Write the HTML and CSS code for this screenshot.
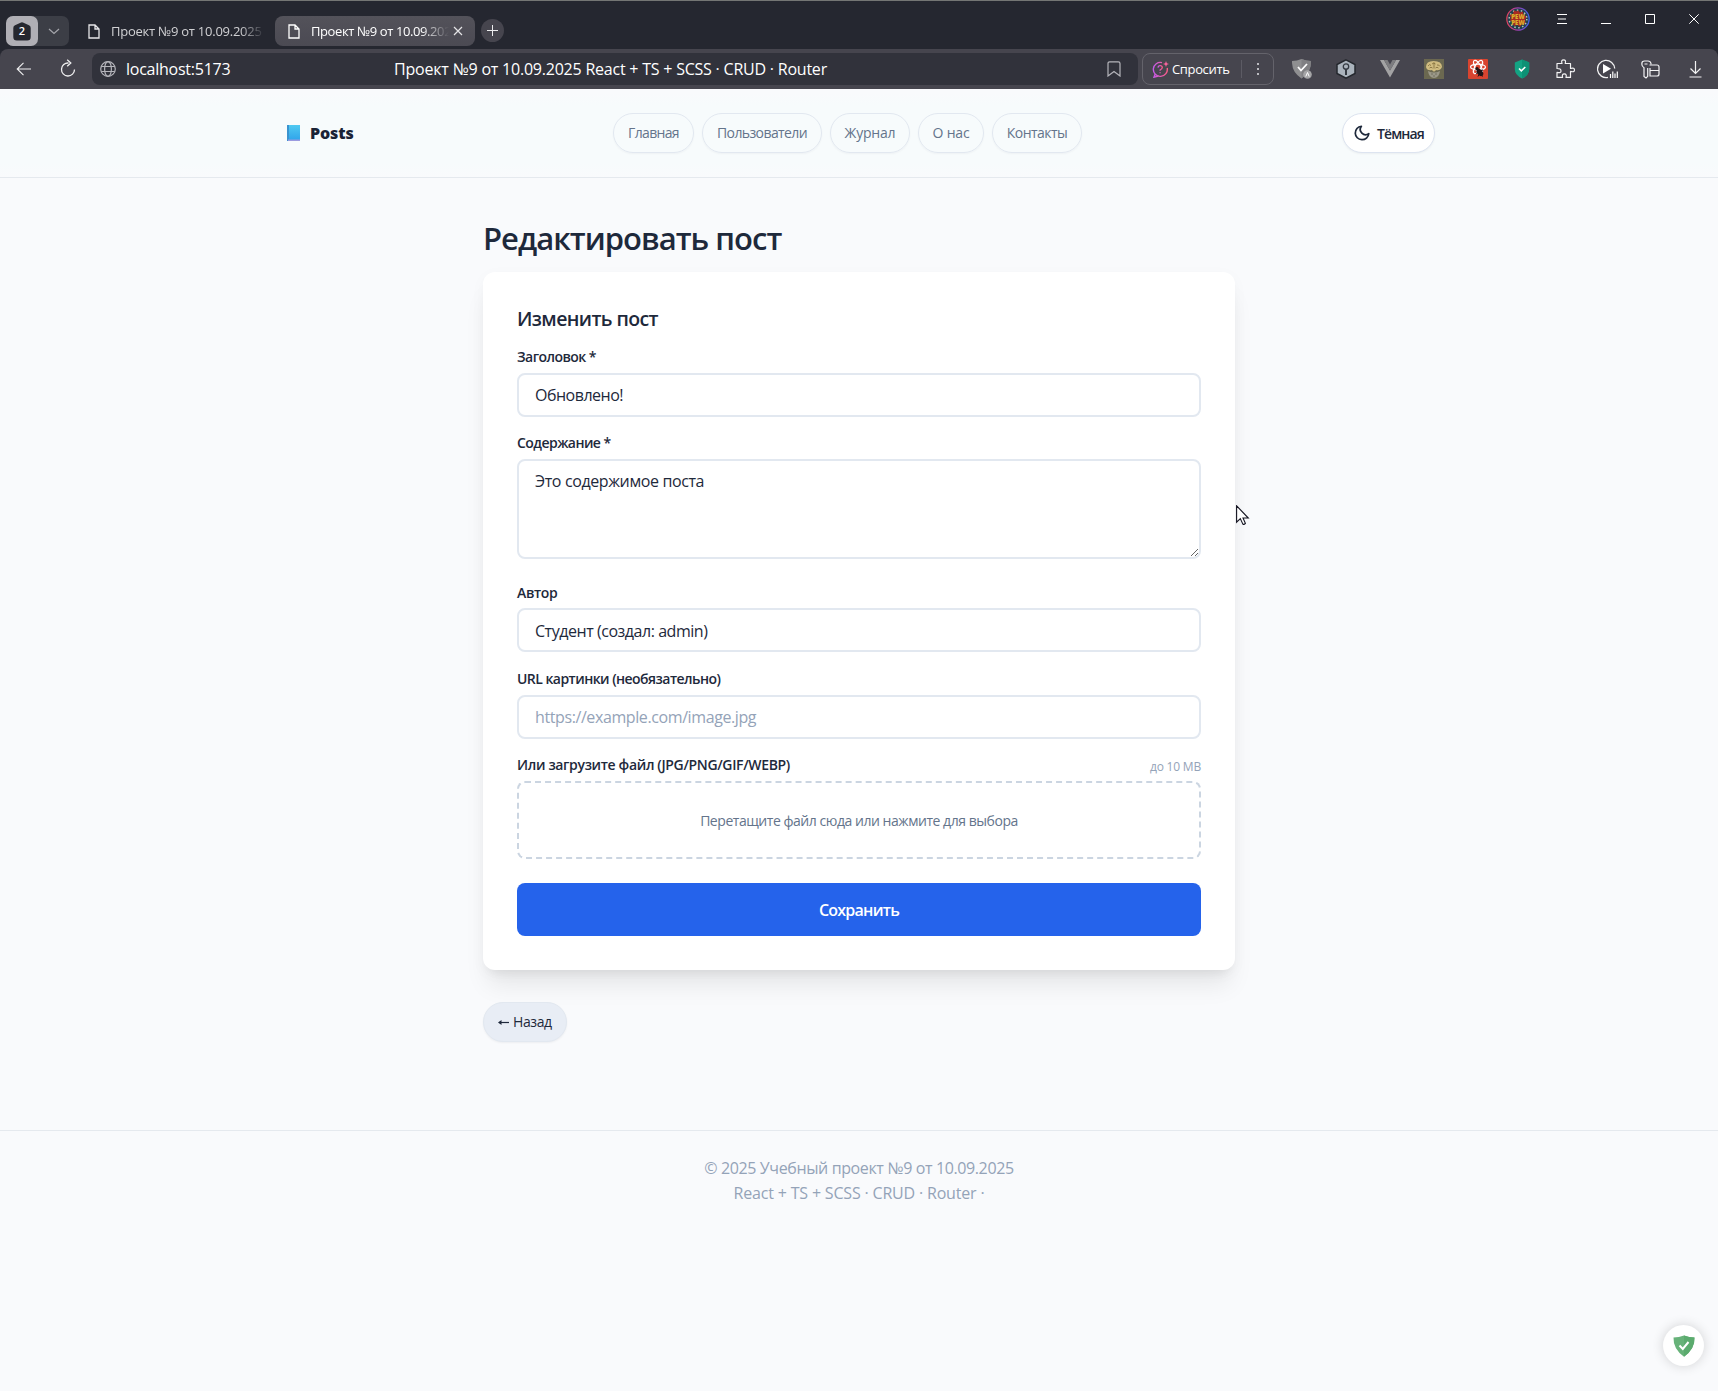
FILE: index.html
```html
<!DOCTYPE html>
<html lang="ru">
<head>
<meta charset="utf-8">
<title>Проект №9 от 10.09.2025</title>
<link rel="stylesheet" href="styles.css">
</head>
<body>
<div class="browser">
  <div class="tabbar">
    <div class="tab-group">
      <div class="tab-count"><svg width="18" height="19" viewBox="0 0 18 19"><path d="M7.5.8Q9-.2 10.500.8L16 3.200Q17.700 4 17.700 6V15q0 3.500-3.500 3.500H3.800Q.3 18.500.3 15V6Q.3 4 2 3.200Z" fill="#25272f"/></svg><span>2</span></div>
      <svg class="chev" width="12" height="7" viewBox="0 0 12 7"><path d="M1 1l5 4.500L11 1" fill="none" stroke="#a5a6ac" stroke-width="1.200"/></svg>
    </div>
    <div class="tab">
      <svg width="12" height="15" viewBox="0 0 12 15"><path d="M1 1h6l4 4v9H1zM7 1v4h4" fill="none" stroke="#e6e6e8" stroke-width="1.300"/></svg>
      <span class="tab-title">Проект №9 от 10.09.2025</span>
    </div>
    <div class="tab tab-active">
      <svg width="12" height="15" viewBox="0 0 12 15"><path d="M1 1h6l4 4v9H1zM7 1v4h4" fill="none" stroke="#fff" stroke-width="1.300"/></svg>
      <span class="tab-title">Проект №9 от 10.09.2025</span>
      <svg width="10" height="10" viewBox="0 0 10 10"><path d="M1 1l8 8M9 1L1 9" stroke="#e4e4e6" stroke-width="1.200"/></svg>
    </div>
    <div class="new-tab"><svg width="11" height="11" viewBox="0 0 11 11"><path d="M5.500 0v11M0 5.500h11" stroke="#ececee"/></svg></div>
    <div class="window-buttons">
      <div class="cell"><svg width="24" height="24" viewBox="0 0 24 24">
        <defs><linearGradient id="ring"><stop offset="0" stop-color="#e0405a"/><stop offset=".5" stop-color="#9b3fae"/><stop offset="1" stop-color="#3d62e8"/></linearGradient></defs>
        <circle cx="12" cy="12" r="11.200" fill="#20404e" stroke="url(#ring)" stroke-width="1.200"/>
        <circle cx="12" cy="12" r="8.800" fill="none" stroke="#b9c4bd" stroke-width="1.500" stroke-dasharray="1.500 2.500"/>
        <path d="M12 3l2 2.500 3-1 .5 3.500 3 2-1.500 3 .5 3-3.500 1-2 3-2.500-2-3.500 1-1-3.500-3-2 1-3-1.500-2.500 3.500-1 1-3.500 3 1z" fill="#a92a22"/>
        <text x="12" y="11.500" text-anchor="middle" class="pew">PEW</text><text x="12" y="18" text-anchor="middle" class="pew">PEW</text></svg></div>
      <div class="cell"><svg width="10" height="10" viewBox="0 0 10 10"><path d="M0 .5h10M1 5h8M0 9.500h10" stroke="#fff"/></svg></div>
      <div class="cell"><svg width="10" height="10" viewBox="0 0 10 10"><path d="M0 9.500h10" stroke="#fff"/></svg></div>
      <div class="cell"><svg width="10" height="10" viewBox="0 0 10 10"><path d="M.5.5h9v9h-9z" fill="none" stroke="#fff"/></svg></div>
      <div class="cell"><svg width="10" height="10" viewBox="0 0 10 10"><path d="M.3.3l9.400 9.400M9.700.3L.3 9.700" stroke="#fff"/></svg></div>
    </div>
  </div>
  <div class="toolbar">
    <svg class="back" width="15" height="14" viewBox="0 0 15 14"><path d="M7.500.8L1.200 7l6.300 6.200M1.200 7H15" fill="none" stroke="#f0f0f1" stroke-width="1.100"/></svg>
    <svg class="reload" width="16" height="18" viewBox="0 0 16 18"><path d="M8.500 4A6.500 6.500 0 1 0 14.500 10.500M7.200.8L10.800 4 7.200 7.200" fill="none" stroke="#f0f0f1" stroke-width="1.300"/></svg>
    <div class="address">
      <svg width="16" height="16" viewBox="0 0 16 16" fill="none" stroke="#b4b4ba" stroke-width="1.200"><circle cx="8" cy="8" r="7.300"/><ellipse cx="8" cy="8" rx="3.400" ry="7.300"/><path d="M1.300 5.500h13.400M1.300 10.500h13.400"/></svg>
      <span class="host">localhost:5173</span>
      <span class="page-title">Проект №9 от 10.09.2025 React + TS + SCSS · CRUD · Router</span>
      <svg class="bookmark" width="14" height="16" viewBox="0 0 14 16"><path d="M1 15V2.500Q1 .8 2.700.8h8.600Q13 .8 13 2.500V15L7 10.500z" fill="none" stroke="#b4b4ba" stroke-width="1.200"/></svg>
    </div>
    <div class="ask">
      <svg width="17" height="17" viewBox="0 0 17 17"><defs><linearGradient id="askg"><stop offset="0" stop-color="#c45be8"/><stop offset="1" stop-color="#ff5c88"/></linearGradient></defs><path d="M10 1.600A7 7 0 1 0 15.200 7M3.300 12.500L2 16.200l5.200-1.300" fill="none" stroke="url(#askg)" stroke-width="1.400"/><path d="M6 6.600q.2-2 2.200-2t2.100 1.900q0 1.200-2.200 2.500v.8M8.100 11.300v1" fill="none" stroke="url(#askg)" stroke-width="1.300"/><path d="M14 0l.8 2.200L17 3l-2.200.8L14 6l-.8-2.200L11 3l2.200-.8z" fill="#ff66a0"/></svg>
      <span class="ask-text">Спросить</span>
      <span class="ask-sep"></span>
      <svg width="2" height="12" viewBox="0 0 2 12" fill="#bbbbc0"><path d="M0 0h2v2H0zM0 5h2v2H0zM0 10h2v2H0z"/></svg>
    </div>
    <div class="extensions">
      <div class="cell"><svg width="20" height="20" viewBox="0 0 20 20"><path d="M0 2Q5 2 9.500 0 14 2 19 2 19.500 13 9.500 19.500-.5 13 0 2z" fill="#8f8f91"/><path d="M9.500 0Q14 2 19 2 19.500 13 9.500 19.500z" fill="#808083"/><path d="M6 8l3 3.500 6-6.500" fill="none" stroke="#fff" stroke-width="1.800"/><circle cx="15.500" cy="15.500" r="4.300" fill="#a5a5a7"/><path d="M13.800 17.500l1.700-4 1.700 4" fill="none" stroke="#fff"/></svg></div>
      <div class="cell"><svg width="20" height="20" viewBox="0 0 20 20"><path d="M10 .8L19 5.500v9L10 19.200 1 14.500v-9z" fill="#aab3bc" stroke="#25282e" stroke-width="1.500"/><circle cx="10" cy="7.500" r="2.700" fill="none" stroke="#343a42" stroke-width="1.300"/><path d="M10 10v6" stroke="#343a42" stroke-width="2"/></svg></div>
      <div class="cell"><svg width="20" height="18" viewBox="0 0 20 18"><path d="M0 0h4l6 10.500L16 0h4L10 17.500z" fill="#a3a3a4"/><path d="M4 0h3.500L10 4.500 12.500 0H16l-6 10.500z" fill="#7d7d80"/></svg></div>
      <div class="cell"><svg width="20" height="20" viewBox="0 0 20 20"><path d="M0 0h20v20H0z" fill="#6b6850"/><path d="M2 8Q2 2 9.500 2 18 2 18 8q-2 4-6 3-2 3-4 0-5 1-6-3z" fill="#d0bc80"/><path d="M4 7q1.500-2.500 3-.5M8 5q2-2 3.500 0M13 6q2-.5 3 1.500M5.500 9q1.500-1.500 3 0M11.500 9q1.500-1.500 3 0M10 3.500v6" fill="none" stroke="#7d6a38" stroke-width=".8"/><path d="M4 12q6 3 12 0-1 7-6 7-5 0-6-7z" fill="#9b9888"/><path d="M7 15h2M11 15h2M9 17h2" stroke="#6a6758" stroke-width=".8"/></svg></div>
      <div class="cell"><svg width="20" height="20" viewBox="0 0 20 20"><rect width="20" height="20" rx="1" fill="#d9442f"/><g fill="none" stroke="#fff" stroke-width="1.200"><ellipse cx="10" cy="8" rx="7.500" ry="2.900"/><ellipse cx="10" cy="8" rx="7.500" ry="2.900" transform="rotate(60 10 8)"/><ellipse cx="10" cy="8" rx="7.500" ry="2.900" transform="rotate(120 10 8)"/></g><ellipse cx="12" cy="13.500" rx="2.600" ry="4" transform="rotate(-40 12 13.500)" fill="#211518"/><circle cx="9" cy="9.800" r="1.800" fill="#211518"/><path d="M8 14.500l7-3.500M10 17.500l4-7M14.500 17.500l-3-6" stroke="#211518"/></svg></div>
      <div class="cell"><svg width="16" height="20" viewBox="0 0 16 20"><path d="M8 .5l7.200 3V10q0 6-7.200 9.500Q.8 16 .8 10V3.500z" fill="#13a383"/><path d="M8 .5l7.200 3V10q0 6-7.200 9.500z" fill="#0d9175"/><path d="M5 9.500l2.300 2.300L11.300 8" fill="none" stroke="#fff" stroke-width="1.600"/></svg></div>
      <div class="cell"><svg width="20" height="20" viewBox="0 0 20 20"><path d="M1 4.500h5q-1.200-3.700 1.600-3.700T9.200 4.500h5.300v5q4-1.300 4 1.400t-4 1.500v6H10q1-3.500-1.700-3.500t-1.700 3.500H1v-5q4 1 4-1.500T1 9.500z" fill="none" stroke="#f2f2f3" stroke-width="1.200" stroke-linejoin="round"/></svg></div>
      <div class="cell play"><svg width="21" height="20" viewBox="0 0 21 20"><path d="M11 18.400A8.600 8.600 0 1 1 17.700 9.500" fill="none" stroke="#f2f2f3" stroke-width="1.300"/><path d="M6 5l8 4.800L6 14.500z" fill="#fff"/><path d="M13.500 15v4M15.800 12.500V19M18 14.500V19M20.300 12.500V19" stroke="#fff" stroke-width="1.200"/></svg></div>
      <div class="cell keys"><svg width="19" height="19" viewBox="0 0 19 19" fill="none" stroke="#f2f2f3" stroke-width="1.200"><path d="M10 4.500V3.500Q9.500 1 7 1H3.500Q.8 1 .8 4q0 2.500 2.200 3.800V16.500L5 18l1.700-1.700V8"/><path d="M8.500 5H16q2 0 2 2v7q0 2-2 2H9V8M9 10.500h9M3.500 4h3"/></svg></div>
      <div class="cell dl"><svg width="13" height="17" viewBox="0 0 13 17"><path d="M6.500 0v12M1.500 7.500l5 5 5-5M.5 16h12" fill="none" stroke="#f2f2f3" stroke-width="1.200"/></svg></div>
    </div>
  </div>
</div>

<header class="header">
  <div class="header-inner">
    <a class="brand"><svg width="13" height="16" viewBox="0 0 13 16"><defs><linearGradient id="book" x2="0" y2="1"><stop offset="0" stop-color="#50c9f1"/><stop offset="1" stop-color="#2ea2ea"/></linearGradient></defs><path d="M0 0h13v16H0z" fill="url(#book)"/><path d="M0 0h2v16H0z" fill="#3a93cf"/><path d="M1 14.500h12V16H1z" fill="#9b9be0"/></svg><span>Posts</span></a>
    <nav class="nav">
      <a class="pill n1">Главная</a><a class="pill n2">Пользователи</a><a class="pill n3">Журнал</a><a class="pill n4">О нас</a><a class="pill n5">Контакты</a>
    </nav>
    <button class="theme"><svg width="18" height="18" viewBox="0 0 24 24"><path d="M21 12.800A9 9 0 1 1 11.200 3a7 7 0 0 0 9.800 9.800z" fill="none" stroke="#1e293b" stroke-width="2.300" stroke-linejoin="round"/></svg><span>Тёмная</span></button>
  </div>
</header>

<main class="main">
  <h1>Редактировать пост</h1>
  <form class="card">
    <h2>Изменить пост</h2>
    <div class="field"><label class="label">Заголовок *</label><input class="input i1" value="Обновлено!"></div>
    <div class="field field-area"><label class="label">Содержание *</label><textarea class="input area">Это содержимое поста</textarea></div>
    <div class="field"><label class="label l3">Автор</label><input class="input i3" value="Студент (создал: admin)"></div>
    <div class="field"><label class="label l4">URL картинки (необязательно)</label><input class="input i4" placeholder="https://example.com/image.jpg"></div>
    <div class="field field-file">
      <div class="file-head"><label class="label l5">Или загрузите файл (JPG/PNG/GIF/WEBP)</label><span class="hint">до 10 MB</span></div>
      <div class="drop">Перетащите файл сюда или нажмите для выбора</div>
    </div>
    <button class="save" type="button">Сохранить</button>
  </form>
  <a class="back-link"><svg width="11" height="7" viewBox="0 0 11 7"><path d="M1 3.500h10" stroke="#1e293b" stroke-width="1.200"/><path d="M0 3.500L3.500 1v5z" fill="#1e293b"/></svg>Назад</a>
</main>

<footer class="footer">
  <div class="f1">© 2025 Учебный проект №9 от 10.09.2025</div>
  <div class="f2">React + TS + SCSS · CRUD · Router ·</div>
</footer>

<div class="guard"><svg width="22" height="22" viewBox="0 0 22 22"><path d="M.5 2.500Q6 2.500 11 .5q5 2 10.500 2Q22 14 11 21.700 0 14 .5 2.500z" fill="#67b279"/><path d="M11 .5q5 2 10.500 2Q22 14 11 21.700z" fill="#5bab6e"/><path d="M6.500 10.500l3.300 3.500 5.700-7" fill="none" stroke="#fff" stroke-width="2"/></svg></div>
<svg class="cursor" width="14" height="21" viewBox="0 0 14 21"><path d="M.6.8v16.400l3.700-3.600 2.600 5.600q1.300.6 2.500-.8L7 13h5.300z" fill="#fff" stroke="#12121f" stroke-width="1.100"/></svg>
</body>
</html>
```
FILE: styles.css
```css
* { box-sizing: border-box; }
body {
  margin: 0;
  position: relative;
  height: 1391px;
  overflow: hidden;
  background: #f9fafc;
  color: #1e293b;
  font: 16px/1.6 "Open Sans", "Noto Sans", sans-serif;
}
svg { display: block; flex: none; }
span, a { white-space: nowrap; }
input, textarea, button { font-family: inherit; color: inherit; margin: 0; }

/* Browser window */
.browser { height: 89px; background: #252730; border-top: 1px solid #747674; color: #fff; }
.tabbar { display: flex; height: 48px; padding: 15px 2px 0 6px; }
.tab-group { display: flex; width: 63px; height: 30px; border-radius: 7px; background: #3c3e46; align-items: center; }
.tab-count { display: grid; place-items: center; width: 32px; height: 30px; border-radius: 7px; background: #b0afb5; }
.tab-count > * { grid-area: 1 / 1; }
.tab-count span { font-size: 11px; font-weight: 600; line-height: 14px; }
.chev { margin-left: 10px; }
.tab { display: flex; align-items: center; width: 200px; height: 30px; margin-left: 6px; padding: 0 12px 0 13px; border-radius: 8px; }
.tab-active { margin-left: 0; background: linear-gradient(#53525a, #4b4a53); padding-right: 12px; }
.tab-title {
  flex: 1;
  margin-left: 11px;
  overflow: hidden;
  font-size: 13px;
  line-height: 20px;
  letter-spacing: -0.25px;
  color: #d0d0d3;
  -webkit-mask-image: linear-gradient(90deg, #000 85%, transparent 101%);
}
.tab-active .tab-title { color: #fff; font-weight: 500; letter-spacing: -0.4px; margin-right: 4px; -webkit-mask-image: linear-gradient(90deg, #000 80%, transparent); }
.new-tab { display: grid; place-items: center; width: 23px; height: 23px; margin: 3px 0 0 6px; border-radius: 50%; background: #46454e; }
.window-buttons { display: flex; margin: -9px 0 0 auto; height: 24px; }
.cell { display: grid; place-items: center; flex: none; width: 44px; }
.pew { font: 800 6px "Open Sans", sans-serif; fill: #d9b02c; }
.toolbar { display: flex; align-items: center; height: 40px; border-radius: 8px 8px 0 0; background: #46454e; }
.back { margin-left: 16px; }
.reload { margin: -3px 0 0 29px; }
.address { display: flex; flex: none; align-items: center; width: 1046px; height: 32px; margin-left: 16px; padding-left: 8px; border-radius: 8px; background: #31323b; line-height: 22px; }
.host { width: 268px; margin-left: 10px; letter-spacing: -0.25px; }
.page-title { letter-spacing: -0.22px; }
.bookmark { margin: 0 17px 0 auto; }
.ask { display: flex; flex: none; align-items: center; width: 132px; height: 32px; margin-left: 4px; padding-left: 9px; border: 1px solid #64636b; border-radius: 8px; font-size: 13px; font-weight: 500; line-height: 20px; }
.ask-text { width: 69px; margin-left: 3px; letter-spacing: -0.35px; }
.ask-sep { width: 1px; height: 18px; margin-right: 15px; background: #5c5b64; }
.extensions { display: flex; flex: none; margin-left: 6px; }
.play { transform: translateX(-3px); }
.keys { transform: translateX(-4px); }
.dl { width: 38px; }

/* Site header */
.header { height: 89px; border-bottom: 1px solid #e5e9ee; background: linear-gradient(#f9fafc 5%, #f7fbfc 18%, #f7fbfc 85%, #f9fafc); }
.header-inner { display: flex; align-items: center; justify-content: space-between; width: 1152px; height: 88px; margin: 0 auto; font-size: 14px; line-height: 20px; }
.brand { display: flex; align-items: center; width: 70px; padding-left: 4px; font-size: 16px; font-weight: 800; letter-spacing: -0.1px; color: #1a2336; }
.brand span { margin-left: 10px; }
.nav { display: flex; gap: 8px; }
.pill { display: flex; align-items: center; justify-content: center; height: 40px; border: 1px solid #e2e8f0; border-radius: 20px; color: #64748b; box-shadow: 0 1px 2px rgba(15, 23, 42, .04); }
.n1 { width: 81px; letter-spacing: -0.65px; }
.n2 { width: 120px; letter-spacing: -0.6px; }
.n3 { width: 80px; letter-spacing: -0.2px; }
.n4 { width: 66px; letter-spacing: -0.2px; }
.n5 { width: 90px; letter-spacing: -0.55px; }
.theme { display: flex; align-items: center; width: 93px; height: 40px; padding: 0 0 0 10px; border: 1px solid #dde4f0; border-radius: 20px; background: #fff; font-size: 14px; font-weight: 600; letter-spacing: -0.9px; box-shadow: 0 1px 2px rgba(15, 23, 42, .05); }
.theme span { margin-left: 6px; }

/* Edit form */
.main { width: 752px; margin: 0 auto; padding-top: 41px; }
h1 { margin: 0 0 15px; padding-top: 1px; font-size: 31px; font-weight: 600; line-height: 37px; letter-spacing: -0.98px; }
h2 { margin: 0 0 15px; padding-top: 1px; font-size: 19.5px; font-weight: 600; line-height: 24px; letter-spacing: -0.6px; }
.card { height: 698px; padding: 34px; border-radius: 12px; background: #fff; box-shadow: 0 20px 25px -5px rgba(0, 0, 0, .08), 0 8px 10px -6px rgba(0, 0, 0, .06), 0 4px 16px rgba(0, 0, 0, .03); }
.field { margin-bottom: 15.8px; }
.field-area { margin-bottom: 22.6px; }
.field-file { margin-bottom: 23.600px; }
.label { display: block; height: 21px; margin-bottom: 5.6px; font-size: 14px; font-weight: 600; line-height: 22px; letter-spacing: -0.55px; }
.l3 { letter-spacing: -0.35px; }
.l4 { letter-spacing: -0.54px; }
.l5 { letter-spacing: -0.34px; }
.input { display: block; width: 100%; height: 44px; padding: 1px 16px 0; border: 2px solid #e2e8f0; border-radius: 8px; background: #fff; font-size: 16px; line-height: 24px; outline: 0; }
.input::placeholder { color: #94a3b8; }
.i1 { letter-spacing: -0.5px; }
.i3 { letter-spacing: -0.46px; }
.i4 { letter-spacing: -0.4px; }
.area { height: 100px; padding: 8px 16px; letter-spacing: -0.38px; resize: vertical; }
.file-head { display: flex; justify-content: space-between; }
.hint { font-size: 12px; line-height: 26px; height: 21px; letter-spacing: -0.2px; color: #94a3b8; }
.drop { display: flex; align-items: center; justify-content: center; height: 78px; padding-top: 2px; border: 2px dashed #cbd5e1; border-radius: 8px; color: #64748b; font-size: 14px; letter-spacing: -0.46px; }
.save { display: block; width: 100%; height: 53px; padding: 2px 0 0; border: 0; border-radius: 8px; background: #2563eb; color: #fff; font-size: 16px; font-weight: 600; letter-spacing: -0.75px; }
.back-link { display: flex; align-items: center; gap: 4px; width: 84px; height: 40px; margin-top: 32px; padding-left: 14px; border: 1px solid #e2e8f0; border-radius: 20px; background: #e8edf5; font-size: 14px; letter-spacing: -0.4px; box-shadow: 0 1px 2px rgba(15, 23, 42, .05); }

.footer { margin-top: 88px; padding-top: 25px; border-top: 1px solid #e5e9ee; color: #94a3b8; text-align: center; line-height: 25px; }
.f1 { letter-spacing: -0.38px; }
.f2 { letter-spacing: -0.18px; }

/* Overlays */
.guard { position: absolute; left: 1663px; top: 1325px; display: grid; place-items: center; width: 41px; height: 41px; border-radius: 50%; background: #fff; box-shadow: 0 0 12px rgba(0, 0, 0, .16); }
.cursor { position: absolute; left: 1236px; top: 505px; }
```
